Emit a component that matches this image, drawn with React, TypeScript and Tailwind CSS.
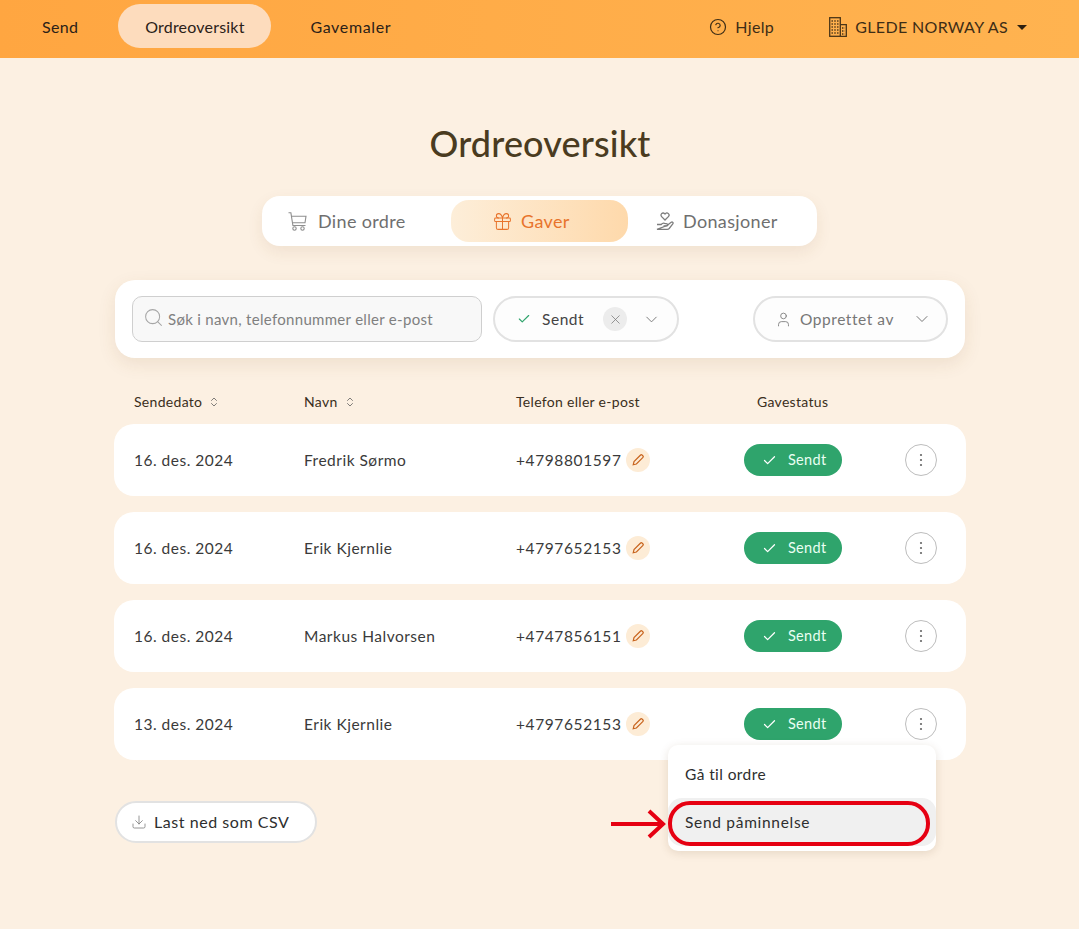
import React from "react";
import { Gift, CircleHelp, Search, Check, X, ChevronDown, User, ChevronsUpDown, Download } from "lucide-react";

const rows = [
  ["16. des. 2024", "Fredrik Sørmo", "+4798801597"],
  ["16. des. 2024", "Erik Kjernlie", "+4797652153"],
  ["16. des. 2024", "Markus Halvorsen", "+4747856151"],
  ["13. des. 2024", "Erik Kjernlie", "+4797652153"],
];

function Building() {
  return (
    <svg width="18" height="20" viewBox="0 0 18 20" fill="none" stroke="#4a3518" strokeWidth="1.3">
      <rect x="0.7" y="0.7" width="10.6" height="18.6" />
      <path d="M11.3 7.7h6v11.6h-6" />
      <path d="M2.5 4h7M2.5 7h7M2.5 10h7M2.5 13h7M2.5 16h7M13 11h3M13 14h3M13 17h3" strokeWidth="1.5" strokeDasharray="1.4 1.4" />
    </svg>
  );
}

function Cart() {
  return (
    <svg width="19" height="19" viewBox="0 0 19 19" fill="none" stroke="#8f8f8f" strokeWidth="1.1">
      <path d="M0.5 0.8h2.4l2 12.7h12.6" />
      <path d="M3.4 4.2H18l-1 6.6H4.5" />
      <circle cx="6.5" cy="16.5" r="1.7" />
      <circle cx="14.5" cy="16.5" r="1.7" />
    </svg>
  );
}

function Hand() {
  return (
    <svg width="18" height="19" viewBox="0 0 18 19" fill="none" stroke="#7d7d7d" strokeWidth="1.3">
      <path d="M9 8 5.6 4.6a2.1 2.1 0 0 1 3-3L9 2l.4-.4a2.1 2.1 0 0 1 3 3Z" />
      <path d="M1 12.5h4.2c1-1.2 2.2-1.6 3.4-1.2l2.4.6c1.2.4 1 2-.4 2H7.5" />
      <path d="M11 13.5 15.2 10.3c1.2-.8 2.5.5 1.6 1.6l-3.6 4.6c-.5.6-1.1.9-1.9.9H1Z" />
    </svg>
  );
}

function Dots() {
  return (
    <svg width="4" height="14" viewBox="0 0 4 14" fill="#666666">
      <circle cx="2" cy="2" r="1.1" />
      <circle cx="2" cy="7" r="1.1" />
      <circle cx="2" cy="12" r="1.1" />
    </svg>
  );
}

function Pen() {
  return (
    <svg width="14" height="14" viewBox="0 0 14 14" fill="none" stroke="#c8641e" strokeWidth="1.2">
      <path d="M2.2 11.8 3 8.6l6.6-6.6a1 1 0 0 1 1.4 0l1 1a1 1 0 0 1 0 1.4L5.4 11Z" />
    </svg>
  );
}

function Row({ row, open }: { row: string[]; open?: boolean }) {
  return (
    <div className="relative flex h-[72px] items-center rounded-[20px] bg-white text-[15.5px] tracking-[0.5px] text-[#3a3a3a]">
      <span className="ml-[20px] w-[170px] pt-[2px]">{row[0]}</span>
      <span className="w-[212px] pt-[2px]">{row[1]}</span>
      <span className="w-[110px] shrink-0 whitespace-nowrap pt-[2px] tracking-[0.6px]">{row[2]}</span>
      <span className="flex h-6 w-6 items-center justify-center rounded-full bg-[#fdecd6]">
        <Pen />
      </span>
      <span className="ml-[94px] flex h-8 w-[98px] items-center gap-[11px] rounded-full bg-[#2fa46c] pl-[18px] text-[14.5px] tracking-[0.3px] text-[#eafff3]">
        <Check size={15} color="#ffffff" />
        Sendt
      </span>
      <span className="ml-[63px] flex h-8 w-8 items-center justify-center rounded-full border border-[#bdbdbd]">
        <Dots />
      </span>
      {open && (
        <div className="absolute left-[554px] top-[57px] z-10 w-[268px] rounded-[10px] bg-white pb-[5px] pt-[5px] tracking-[0.7px] text-[#2e2e2e] shadow-[0_2px_10px_rgba(90,60,20,0.14)]">
          <div className="flex h-[48px] items-center pl-[17px] pt-[2px] tracking-[0.4px]">Gå til ordre</div>
          <div className="relative flex h-[48px] items-center rounded-[14px] bg-[#f0f0f0] pl-[17px] pt-[2px]">
            Send påminnelse
            <div className="absolute bottom-[0px] left-0 right-[6px] top-[3px] rounded-[22px] border-4 border-[#e60012]" />
            <svg className="absolute -left-[57px] top-[9px]" width="56" height="34" viewBox="0 0 56 34" fill="none" stroke="#e60012" strokeWidth="4">
              <path d="M0 17H52M38 4l14 13-14 13" />
            </svg>
          </div>
        </div>
      )}
    </div>
  );
}

export default function App() {
  return (
    <div className="min-h-[929px] bg-[#fcf0e2] font-['Lato','Liberation_Sans',sans-serif] text-[#2b2118]">
      <header className="flex h-[58px] items-center bg-gradient-to-r from-[#ffa641] to-[#ffb350] pb-[4px] text-[16px] tracking-[0.35px]">
        <span className="ml-[42px]">Send</span>
        <span className="ml-[40px] mt-[4px] flex h-[44px] w-[153px] items-center justify-center self-start rounded-[22px] bg-[#fddcbd] pt-[2px] tracking-[0.2px]">Ordreoversikt</span>
        <span className="ml-[39px] tracking-[0.65px]">Gavemaler</span>
        <span className="ml-auto flex items-center gap-[8px] text-[#3d2d16]">
          <CircleHelp size={18} strokeWidth={1.6} />
          Hjelp
        </span>
        <span className="ml-[55px] mr-[52px] flex items-center gap-[8px] text-[#3d2d16]">
          <Building />
          GLEDE NORWAY AS
          <span className="ml-[1px] h-0 w-0 border-x-[5px] border-t-[5px] border-x-transparent border-t-[#2d2010]" />
        </span>
      </header>

      <main className="pl-[114px] pr-[113px]">
        <h1 className="mt-[62px] text-center text-[36px] font-medium leading-[46px] tracking-[0.15px] text-[#4a3b20]">Ordreoversikt</h1>

        <div className="ml-[148px] mt-[30px] flex h-[50px] w-[555px] items-center rounded-[18px] bg-white px-[4px] text-[18px] tracking-[0.35px] text-[#6f6f6f] shadow-[0_6px_16px_rgba(120,80,30,0.09)]">
          <span className="flex w-[185px] items-center gap-[11px] pl-[22px]">
            <Cart />
            Dine ordre
          </span>
          <span className="flex h-[42px] w-[177px] items-center gap-[8px] rounded-[18px] bg-gradient-to-r from-[#fdeed9] to-[#fed9ab] pl-[41px] text-[#e8742c]">
            <Gift size={21} strokeWidth={1.15} />
            Gaver
          </span>
          <span className="flex items-center gap-[9px] pl-[28px]">
            <Hand />
            Donasjoner
          </span>
        </div>

        <div className="mx-px mt-[34px] flex h-[78px] items-center rounded-[20px] bg-white px-[17px] shadow-[0_6px_18px_rgba(120,80,30,0.1)]">
          <div className="flex h-[46px] w-[350px] items-center gap-[4px] rounded-[10px] border border-[#cfcfcf] bg-[#f8f8f8] pl-[10px] text-[15px] tracking-[0.3px] text-[#808080]">
            <Search size={21} strokeWidth={1.15} color="#a6a6a6" className="-mt-[4px]" />
            Søk i navn, telefonnummer eller e-post
          </div>
          <div className="ml-[11px] flex h-[46px] w-[186px] items-center rounded-full border-2 border-[#e2e2e2] bg-[#fdfdfd] pl-[22px] text-[15.5px] tracking-[0.55px] text-[#444444]">
            <Check size={14} color="#2fa46c" />
            <span className="ml-[11px] pt-[1px]">Sendt</span>
            <span className="ml-[19px] flex h-6 w-6 items-center justify-center rounded-full bg-[#ececec]">
              <X size={15} strokeWidth={1.2} color="#777777" />
            </span>
            <ChevronDown size={19} strokeWidth={1.2} color="#777777" className="ml-[15px]" />
          </div>
          <div className="ml-auto flex h-[46px] w-[195px] items-center rounded-full border-2 border-[#e2e2e2] bg-[#fdfdfd] pl-[20px] text-[15.5px] tracking-[0.55px] text-[#777777]">
            <User size={17} strokeWidth={1.2} />
            <span className="ml-[8px] pt-[1px]">Opprettet av</span>
            <ChevronDown size={20} strokeWidth={1.2} className="ml-[18px]" />
          </div>
        </div>

        <div className="flex h-[66px] items-end pb-[12px] pl-[20px] text-[14px] tracking-[0.3px] text-[#3a2e20]">
          <span className="flex w-[170px] items-center gap-[6px]">Sendedato <ChevronsUpDown size={12} strokeWidth={1.5} color="#555555" /></span>
          <span className="flex w-[212px] items-center gap-[6px]">Navn <ChevronsUpDown size={12} strokeWidth={1.5} color="#555555" /></span>
          <span className="w-[241px]">Telefon eller e-post</span>
          <span>Gavestatus</span>
        </div>

        <div className="flex flex-col gap-4">
          {rows.map((r, i) => (
            <Row key={i} row={r} open={i === 3} />
          ))}
        </div>

        <div className="mx-px mt-[41px] flex h-[42px] w-[202px] items-center gap-[7px] rounded-full border-2 border-[#e2e2e2] bg-white pl-[14px] text-[16px] tracking-[0.55px] text-[#2e2e2e]">
          <Download size={16} strokeWidth={1.15} color="#777777" />
          Last ned som CSV
        </div>
      </main>
    </div>
  );
}
